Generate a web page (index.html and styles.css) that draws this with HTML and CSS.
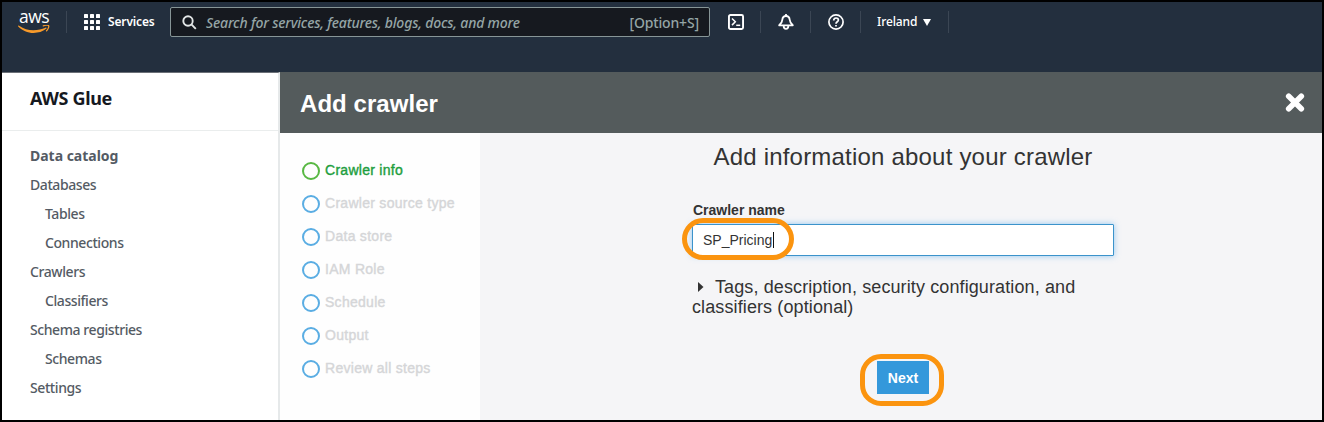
FILE: index.html
```html
<!DOCTYPE html>
<html lang="en">
<head>
<meta charset="utf-8">
<title>AWS Glue - Add crawler</title>
<link rel="stylesheet" href="styles.css">
</head>
<body>
<div class="window">
  <header class="topbar">
    <div class="logo">
      <span class="logo-text">aws</span>
      <svg class="logo-smile" width="32" height="9" viewBox="0 0 32 9">
        <path d="M.7.5C6 4 10 5.200 15.300 5.200 20 5.200 24 4.300 27.500 2.700c1-.4 1.500.5.7 1.100C24.700 6.700 20.300 7.900 15.600 7.900 9.600 7.900 4.200 5.400.2 1.400-.2.900.200.200.700.500z" fill="#f79a2a"/>
        <path d="M25.300.9c1.800-.8 4.800-.9 5.300-.3.500.7-.3 3.600-2 5.100" fill="none" stroke="#f79a2a" stroke-width="1.300" stroke-linecap="round"/>
      </svg>
    </div>
    <span class="divider"></span>
    <div class="services">
      <svg width="16" height="16" viewBox="0 0 16 16" fill="#fff">
        <rect width="4" height="4" rx=".6"/><rect x="6" width="4" height="4" rx=".6"/><rect x="12" width="4" height="4" rx=".6"/>
        <rect y="6" width="4" height="4" rx=".6"/><rect x="6" y="6" width="4" height="4" rx=".6"/><rect x="12" y="6" width="4" height="4" rx=".6"/>
        <rect y="12" width="4" height="4" rx=".6"/><rect x="6" y="12" width="4" height="4" rx=".6"/><rect x="12" y="12" width="4" height="4" rx=".6"/>
      </svg>
      <span class="services-label">Services</span>
    </div>
    <div class="search">
      <svg width="15" height="15" viewBox="0 0 15 15" fill="none" stroke="#e3e6e6" stroke-width="1.900">
        <circle cx="6" cy="6" r="4.700"/><path d="M9.400 9.400l4.400 4.400"/>
      </svg>
      <span class="search-hint">Search for services, features, blogs, docs, and more</span>
      <span class="search-key">[Option+S]</span>
    </div>
    <div class="tools">
      <svg class="tool" width="16" height="16" viewBox="0 0 16 16" fill="none" stroke="#fff" stroke-width="1.900">
        <rect x=".95" y=".95" width="14.100" height="14.100" rx="1.500"/><path d="M4 4.500l3.300 3.300L4 11.100" stroke-width="1.500"/><path d="M8.200 11.300h4" stroke-width="1.500"/>
      </svg>
      <span class="divider"></span>
      <svg class="tool" width="16" height="16" viewBox="0 0 16 16" fill="none" stroke="#fff" stroke-width="1.800" stroke-linejoin="round">
        <path d="M8 2C5.600 2 4.500 3.700 4.300 5.800 4.100 8.300 3.200 9.600 1.200 11.300h13.600C12.800 9.600 11.900 8.300 11.700 5.800 11.500 3.700 10.400 2 8 2z"/>
        <path d="M8 0v2"/><path d="M5.700 12c0 3.900 4.600 3.900 4.600 0"/>
      </svg>
      <span class="divider"></span>
      <svg class="tool" width="16" height="16" viewBox="0 0 16 16" fill="none" stroke="#fff" stroke-width="1.700">
        <circle cx="8" cy="8" r="7.100"/><path d="M5.700 6.500C5.700 3.200 10.400 3.300 10.400 6 10.400 7.800 8 7.700 8 9.700"/><path d="M8 10.900v1.600"/>
      </svg>
      <span class="divider"></span>
      <div class="region">
        <span class="region-label">Ireland</span>
        <svg width="8" height="7" viewBox="0 0 8 7" fill="#fff"><path d="M0 0h8L4 7z"/></svg>
      </div>
      <span class="divider"></span>
    </div>
  </header>
  <div class="main">
    <nav class="sidebar">
      <div class="sidebar-title"><span>AWS Glue</span></div>
      <ul class="nav">
        <li class="nav-head"><span>Data catalog</span></li>
        <li><span>Databases</span></li>
        <li class="nav-sub"><span>Tables</span></li>
        <li class="nav-sub"><span>Connections</span></li>
        <li><span>Crawlers</span></li>
        <li class="nav-sub"><span>Classifiers</span></li>
        <li><span>Schema registries</span></li>
        <li class="nav-sub"><span>Schemas</span></li>
        <li><span>Settings</span></li>
      </ul>
    </nav>
    <section class="wizard">
      <div class="wizard-bar">
        <h1>Add crawler</h1>
        <svg width="20" height="20" viewBox="0 0 20 20" stroke="#fff" stroke-width="5.600" stroke-linecap="round"><path d="M3.700 3.200l12.600 12.600M16.300 3.200L3.700 15.800"/></svg>
      </div>
      <div class="wizard-body">
        <ol class="steps">
          <li class="active"><i></i><span>Crawler info</span></li>
          <li><i></i><span>Crawler source type</span></li>
          <li><i></i><span>Data store</span></li>
          <li><i></i><span>IAM Role</span></li>
          <li><i></i><span>Schedule</span></li>
          <li><i></i><span>Output</span></li>
          <li><i></i><span>Review all steps</span></li>
        </ol>
        <div class="form">
          <h2>Add information about your crawler</h2>
          <div class="fields">
            <span class="label">Crawler name</span>
            <div class="input"><span>SP_Pricing</span><span class="caret"></span><span class="name-ring"></span></div>
            <p class="more"><svg width="6" height="10" viewBox="0 0 6 10" fill="#333"><path d="M0 0l5.500 5L0 10z"/></svg>Tags, description, security configuration, and<br>classifiers (optional)</p>
          </div>
          <div class="button">Next<span class="button-ring"></span></div>
        </div>
      </div>
    </section>
  </div>
</div>
</body>
</html>
```
FILE: styles.css
```css
* { box-sizing: border-box; }
body { margin: 0; font-family: "Liberation Sans", Arial, sans-serif; color: #333; }
h1, h2, p, ul, ol { margin: 0; padding: 0; }
ul, ol { list-style: none; }
svg { display: block; flex: none; }
span { white-space: nowrap; }

.window { width: 1324px; height: 422px; border: 2px solid #000; display: flex; flex-direction: column; overflow: hidden; }

/* top navigation */
.topbar { height: 70px; flex: none; background: #232f3e; display: flex; align-items: flex-start; color: #fff; font-family: "Noto Sans", sans-serif; }
.logo { width: 64px; flex: none; padding: 6px 0 0 16px; }
.logo-text { display: block; height: 16px; margin-left: 1px; font: 500 17.500px/16px "Open Sans", sans-serif; letter-spacing: -.5px; }
.logo-smile { margin-top: 1px; }
.divider { width: 1px; height: 22px; margin-top: 9px; background: #3b4654; flex: none; }
.services { display: flex; align-items: center; gap: 8px; width: 103px; height: 16px; margin-top: 12px; padding-left: 17px; }
.services-label { font-size: 12px; line-height: 16px; font-weight: 600; letter-spacing: -.15px; }
.search { width: 540px; height: 30px; margin-top: 5px; padding: 0 10px 0 11px; display: flex; align-items: center; background: #16191f; border: 1px solid #879596; border-radius: 2px; color: #95a5a6; font-size: 14px; }
.search-hint { margin-left: 9px; font-style: italic; font-weight: 500; letter-spacing: -.18px; }
.search-key { margin-left: auto; font-weight: 500; letter-spacing: -.15px; }
.tools { display: flex; align-items: flex-start; padding-left: 1px; }
.tool { margin: 12px 16px 0 17px; }
.region { display: flex; align-items: center; gap: 6px; height: 22px; width: 87px; padding-left: 16px; margin-top: 9px; }
.region-label { font-size: 12px; line-height: 16px; font-weight: 500; letter-spacing: -.1px; }

/* left navigation */
.main { display: flex; flex: 1; min-height: 0; }
.sidebar { width: 278px; flex: none; border-right: 2px solid #e6e9ea; background: #fff; border-top: 1px solid #6b7077; font-family: "Noto Sans", sans-serif; }
.sidebar-title { height: 58px; padding: 13px 0 0 28px; border-bottom: 1px solid #eaeded; color: #16191f; font-size: 18px; line-height: 24px; font-weight: 700; letter-spacing: -.32px; }
.nav { padding: 10px 0 0 28px; color: #545b64; font-size: 14px; line-height: 29px; font-weight: 500; letter-spacing: -.42px; }
.nav-head { font-weight: 700; letter-spacing: -.02px; }
.nav-sub { padding-left: 15px; }

/* wizard */
.wizard { flex: 1; display: flex; flex-direction: column; }
.wizard-bar { height: 61px; flex: none; display: flex; justify-content: space-between; align-items: center; padding: 0 17px 0 20px; background: #545b5c; color: #fff; }
.wizard-bar h1 { font-size: 24px; line-height: 30px; padding-top: 2px; letter-spacing: .05px; }
.wizard-body { display: flex; flex: 1; }
.steps { width: 200px; flex: none; padding: 21px 0 0 22px; background: #fefefe; }
.steps li { height: 33px; display: flex; align-items: center; gap: 6px; color: #d5d6d8; font-size: 14px; -webkit-text-stroke: .4px currentColor; letter-spacing: .28px; }
.steps li span { padding-bottom: 2px; }
.steps i { width: 18px; height: 18px; margin-right: -1px; border: 2px solid #5aade3; border-radius: 50%; }
.steps .active { color: #1e9e3e; }
.steps .active i { border-color: #58b843; }
.form { flex: 1; background: #f5f5f7; display: flex; flex-direction: column; align-items: center; padding: 8px 0 0 4px; }
.form h2 { font-size: 24px; font-weight: 400; line-height: 32px; letter-spacing: .2px; }
.fields { width: 422px; margin-top: 29px; }
.label { display: block; padding-left: 1px; font-size: 14px; font-weight: 700; line-height: 16px; }
.input { position: relative; display: flex; align-items: center; height: 32px; margin-top: 6px; padding-left: 10px; background: #fff; border: 1px solid #3b93cb; border-radius: 1px; box-shadow: 0 0 6px rgba(82, 168, 236, .6); font-size: 14px; }
.caret { width: 1px; height: 16px; margin-left: 1px; background: #111; }
.name-ring { position: absolute; left: -11px; top: -7px; width: 112px; height: 42px; border: 5px solid #fb940f; border-radius: 21px; }
.more { margin-top: 21px; font-size: 18px; line-height: 20px; letter-spacing: .11px; }
.more svg { display: inline-block; margin: 0 11px 1px 6px; }
.button { position: relative; width: 52px; height: 33px; margin-top: 44px; background: #3498db; color: #fff; font-size: 14px; font-weight: 700; line-height: 34px; text-align: center; }
.button-ring { position: absolute; left: -17px; top: -7px; width: 84px; height: 52px; border: 5px solid #fb940f; border-radius: 21px; }
```
